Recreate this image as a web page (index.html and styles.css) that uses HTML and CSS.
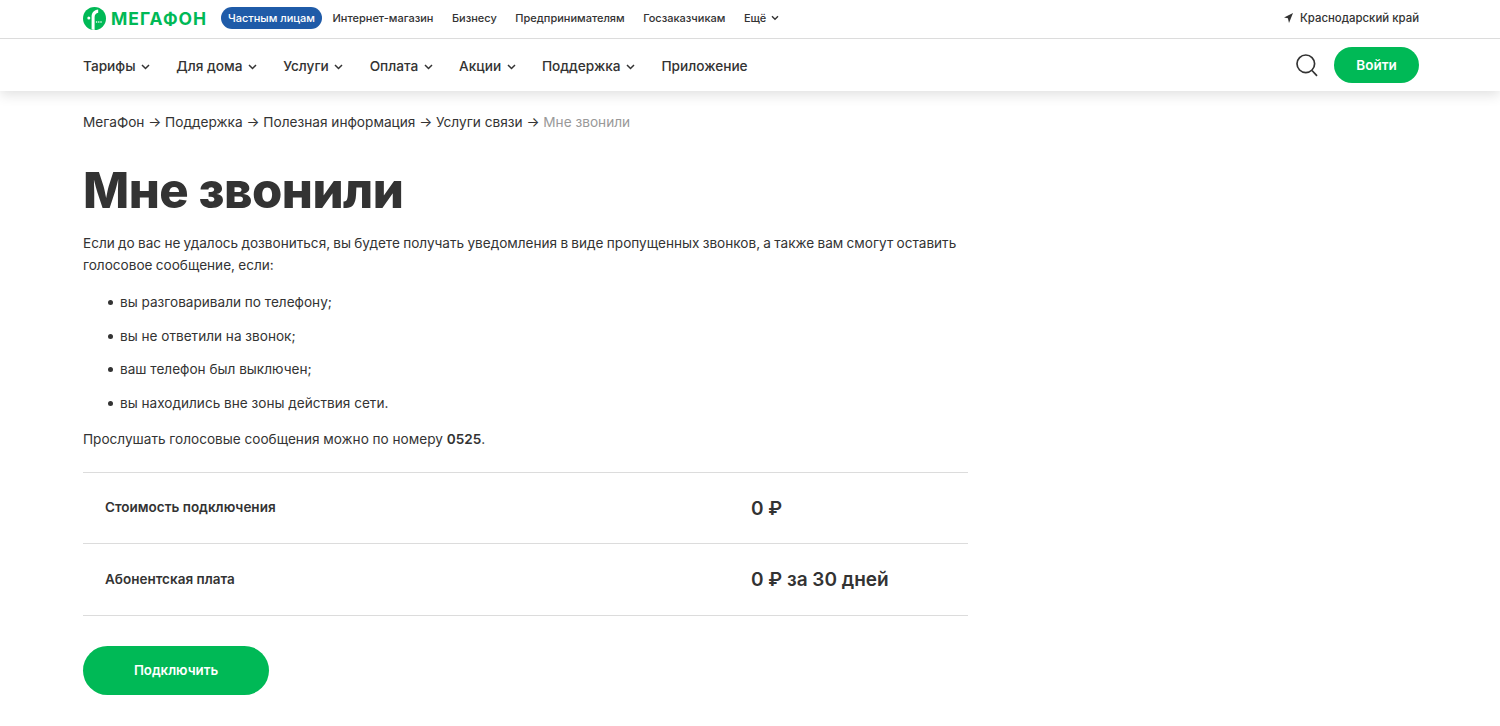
FILE: index.html
```html
<!DOCTYPE html>
<html lang="ru">
<head>
    <meta charset="UTF-8">
    <meta name="viewport" content="width=device-width, initial-scale=1.0">
    <title>Мне звонили</title>
    <link rel="stylesheet" href="styles.css">
</head>
<body>

<header class="header">
    <div class="top-bar">
        <a class="logo" href="#">
            <svg class="logo-icon" width="23" height="23" viewBox="0 0 23 23">
                <circle cx="11.5" cy="11.5" r="11.5" fill="#00b956"/>
                <path d="M9.6 23V10.2C9.6 7.6 11 6.2 13.2 5.8V2.4C9 2.8 6.6 5.6 6.6 9.6V22.6Z" fill="#fff" transform="translate(2 0)"/>
                <circle cx="5.8" cy="11" r="1.5" fill="#fff"/>
                <circle cx="13.6" cy="15" r=".8" fill="#fff"/>
                <circle cx="15.8" cy="15" r=".8" fill="#fff"/>
                <circle cx="18" cy="15" r=".8" fill="#fff"/>
            </svg>
            <span class="logo-text">МегаФон</span>
        </a>
        <nav class="top-links">
            <a class="top-link top-link-active" href="#">Частным лицам</a>
            <a class="top-link" href="#">Интернет-магазин</a>
            <a class="top-link" href="#">Бизнесу</a>
            <a class="top-link" href="#">Предпринимателям</a>
            <a class="top-link" href="#">Госзаказчикам</a>
            <a class="top-link" href="#">Ещё
                <svg class="chevron" width="8" height="6" viewBox="0 0 8 6"><path d="M1 1.2l3 3 3-3" fill="none" stroke="#333" stroke-width="1.4"/></svg>
            </a>
        </nav>
        <a class="region" href="#">
            <svg width="9" height="10" viewBox="0 0 9 10"><path d="M9 0L0 4.4l3.9.9L5 10z" fill="#333"/></svg>
            Краснодарский край
        </a>
    </div>
    <div class="main-bar">
        <nav class="main-links">
            <a class="main-link" href="#">Тарифы <svg class="chevron" width="9" height="6" viewBox="0 0 9 6"><path d="M1 1l3.5 3.5L8 1" fill="none" stroke="#333" stroke-width="1.5"/></svg></a>
            <a class="main-link" href="#">Для дома <svg class="chevron" width="9" height="6" viewBox="0 0 9 6"><path d="M1 1l3.5 3.5L8 1" fill="none" stroke="#333" stroke-width="1.5"/></svg></a>
            <a class="main-link" href="#">Услуги <svg class="chevron" width="9" height="6" viewBox="0 0 9 6"><path d="M1 1l3.5 3.5L8 1" fill="none" stroke="#333" stroke-width="1.5"/></svg></a>
            <a class="main-link" href="#">Оплата <svg class="chevron" width="9" height="6" viewBox="0 0 9 6"><path d="M1 1l3.5 3.5L8 1" fill="none" stroke="#333" stroke-width="1.5"/></svg></a>
            <a class="main-link" href="#">Акции <svg class="chevron" width="9" height="6" viewBox="0 0 9 6"><path d="M1 1l3.5 3.5L8 1" fill="none" stroke="#333" stroke-width="1.5"/></svg></a>
            <a class="main-link" href="#">Поддержка <svg class="chevron" width="9" height="6" viewBox="0 0 9 6"><path d="M1 1l3.5 3.5L8 1" fill="none" stroke="#333" stroke-width="1.5"/></svg></a>
            <a class="main-link" href="#">Приложение</a>
        </nav>
        <div class="main-actions">
            <svg width="22" height="23" viewBox="0 0 22 23"><circle cx="9.8" cy="9.8" r="8.8" fill="none" stroke="#333" stroke-width="1.7"/><path d="M16 16.5l5 5.3" fill="none" stroke="#333" stroke-width="1.7"/></svg>
            <a class="login-btn" href="#">Войти</a>
        </div>
    </div>
</header>

<main class="content">
    <div class="breadcrumbs">МегаФон → Поддержка → Полезная информация → Услуги связи → <span class="breadcrumbs-current">Мне звонили</span></div>

    <h1>Мне звонили</h1>

    <p class="intro">Если до вас не удалось дозвониться, вы будете получать уведомления в виде пропущенных звонков, а также вам смогут оставить голосовое сообщение, если:</p>

    <ul class="reasons">
        <li>вы разговаривали по телефону;</li>
        <li>вы не ответили на звонок;</li>
        <li>ваш телефон был выключен;</li>
        <li>вы находились вне зоны действия сети.</li>
    </ul>

    <p class="listen">Прослушать голосовые сообщения можно по номеру <b>0525</b>.</p>

    <div class="prices">
        <div class="price-row">
            <div class="price-name">Стоимость подключения</div>
            <div class="price-value">0 ₽</div>
        </div>
        <div class="price-row">
            <div class="price-name">Абонентская плата</div>
            <div class="price-value">0 ₽ за 30 дней</div>
        </div>
    </div>

    <a class="connect-btn" href="#">Подключить</a>
</main>

</body>
</html>
```

FILE: styles.css
```css
* {
    box-sizing: border-box;
}

html, body {
    height: 100%;
}

body {
    margin: 0;
    font-family: Inter, "Noto Sans", sans-serif;
    color: #333;
    background-color: white;
    overflow: hidden;
}

a {
    color: inherit;
    text-decoration: none;
}

.header {
    box-shadow: 0 4px 12px rgba(0, 0, 0, 0.12);
}

.top-bar {
    display: flex;
    align-items: center;
    height: 39px;
    padding: 0 81px 2px 83px;
    border-bottom: 1px solid #dcdcdc;
}

.logo {
    display: flex;
    align-items: center;
    gap: 5px;
    margin-right: 14px;
}

.logo-text {
    width: 96px;
    font-size: 17.5px;
    font-weight: 700;
    letter-spacing: 1px;
    text-transform: uppercase;
    white-space: nowrap;
    color: #00b956;
}

.top-links {
    display: flex;
    align-items: center;
    gap: 18.5px;
    flex: 1;
}

.top-link {
    font-size: 11px;
    font-weight: 500;
}

.top-link-active {
    margin-right: -8px;
    padding: 4px 7px;
    height: 22px;
    line-height: 14px;
    border-radius: 11px;
    background-color: #1f5ba8;
    color: white;
}

.chevron {
    margin-left: 2px;
    vertical-align: 1px;
}

.region {
    display: flex;
    align-items: center;
    gap: 7px;
    font-size: 11.4px;
    font-weight: 500;
}

.main-bar {
    display: flex;
    align-items: center;
    justify-content: space-between;
    height: 52px;
    padding: 0 81px 0 83px;
}

.main-links {
    display: flex;
    gap: 26.2px;
    padding-top: 2px;
}

.main-link {
    font-size: 13.65px;
    font-weight: 500;
}

.main-actions {
    display: flex;
    align-items: center;
    gap: 16px;
}

.login-btn {
    width: 85px;
    height: 36px;
    line-height: 36px;
    text-align: center;
    border-radius: 18px;
    background-color: #00b956;
    color: white;
    font-size: 13.5px;
    font-weight: 600;
}

.content {
    padding: 0 83px;
    box-sizing: content-box;
    width: 885px;
}

.breadcrumbs {
    margin-top: 21px;
    font-size: 13.65px;
    line-height: 20px;
}

.breadcrumbs-current {
    color: #999;
}

h1 {
    margin: 29px 0 0;
    font-size: 49px;
    line-height: 60px;
    font-weight: 800;
    letter-spacing: -0.5px;
}

.intro {
    margin: 11px 0 0;
    font-size: 13.6px;
    word-spacing: -0.55px;
    line-height: 22px;
}

.reasons {
    list-style: none;
    margin: 15px 0 0;
    padding: 0 0 0 24px;
}

.reasons li {
    position: relative;
    font-size: 13.6px;
    line-height: 22px;
    margin-bottom: 11.7px;
    padding-left: 13px;
}

.reasons li::before {
    content: "";
    position: absolute;
    left: 1px;
    top: 9px;
    width: 5px;
    height: 5px;
    border-radius: 50%;
    background-color: #333;
}

.listen {
    margin: 14px 0 0;
    font-size: 13.6px;
    line-height: 22px;
}

.listen b {
    font-weight: 600;
}

.prices {
    margin-top: 22px;
    border-top: 1px solid #dcdcdc;
}

.price-row {
    display: flex;
    align-items: center;
    height: 71.4px;
    padding-left: 22px;
    border-bottom: 1px solid #dcdcdc;
}

.price-name {
    width: 646px;
    font-size: 13.5px;
    font-weight: 600;
    margin-top: -2px;
}

.price-value {
    font-size: 19px;
    font-weight: 600;
}

.connect-btn {
    display: block;
    margin-top: 30px;
    width: 186px;
    height: 49px;
    line-height: 49px;
    text-align: center;
    border-radius: 25px;
    background-color: #00b956;
    color: white;
    font-size: 13.3px;
    font-weight: 600;
}
```
